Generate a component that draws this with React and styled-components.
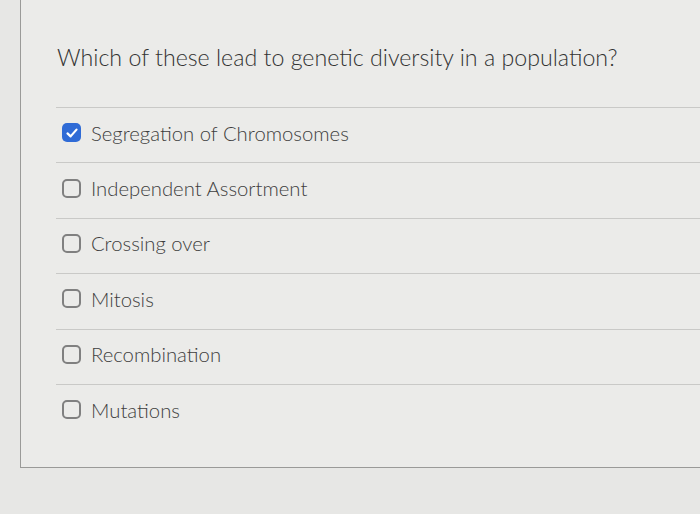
import React from "react";
import styled, { createGlobalStyle } from "styled-components";

const Global = createGlobalStyle`
  html, body { margin: 0; padding: 0; background: #e7e7e5; }
  body { font-family: Lato, "Open Sans", sans-serif; color: #3b3b3b; }
`;

const Page = styled.div`
  width: 700px;
  height: 514px;
  overflow: hidden;
  background: #e7e7e5;
`;

const Card = styled.div`
  margin-left: 20px;
  border-left: 1.5px solid #9a9a98;
  border-bottom: 1.5px solid #9a9a98;
  background: #ebebe9;
  padding: 40px 0 28px 35px;
`;

const Title = styled.h1`
  margin: 0 0 33px 1px;
  font-size: 23.2px;
  font-weight: 300;
  line-height: 34px;
  color: #333;
  letter-spacing: 0;
`;

const List = styled.div`
  display: flex;
  flex-direction: column;
`;

const Row = styled.label`
  display: flex;
  align-items: center;
  gap: 10px;
  height: 55.4px;
  border-top: 1.5px solid #c9c9c7;
  padding-left: 6px;
  padding-bottom: 5px;
  box-sizing: border-box;
  font-size: 20.3px;
  font-weight: 300;
  color: #3e3e3e;
`;

const Box = styled.span`
  width: 19px;
  height: 19px;
  box-sizing: border-box;
  border-radius: 5px;
  flex: none;
  display: flex;
  align-items: center;
  justify-content: center;
  background: ${(p) => (p.$checked ? "#2f6bd6" : "transparent")};
  border: ${(p) => (p.$checked ? "none" : "2px solid #808080")};
`;

const options = [
  ["Segregation of Chromosomes", true],
  ["Independent Assortment", false],
  ["Crossing over", false],
  ["Mitosis", false],
  ["Recombination", false],
  ["Mutations", false],
];

export default function App() {
  return (
    <Page>
      <Global />
      <Card>
        <Title>Which of these lead to genetic diversity in a population?</Title>
        <List>
          {options.map(([label, checked]) => (
            <Row key={label}>
              <Box $checked={checked}>
                {checked && (
                  <svg width="14" height="14" viewBox="0 0 14 14">
                    <path d="M2.5 7.4 L5.6 10.4 L11.5 3.6" fill="none" stroke="#fff" strokeWidth="2.2" strokeLinecap="round" strokeLinejoin="round" />
                  </svg>
                )}
              </Box>
              {label}
            </Row>
          ))}
        </List>
      </Card>
    </Page>
  );
}
